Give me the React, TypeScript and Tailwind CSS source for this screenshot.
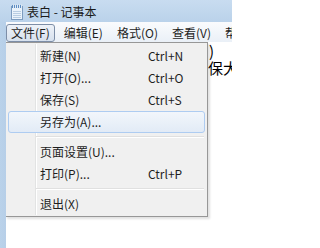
import type { ReactNode } from 'react';

const cjk = '"Noto Sans CJK SC", "Noto Sans", sans-serif';

function NotepadIcon() {
  return (
    <svg width="16" height="16" viewBox="0 0 16 16" className="shrink-0">
      <rect x="2.5" y="2.5" width="11" height="13" fill="#eaf3fb" stroke="#7c9cbf" />
      <rect x="3" y="1" width="10" height="3" fill="#5d8ec4" />
      {[4, 6, 8, 10, 12].map((x) => (
        <rect key={x} x={x} y="0.5" width="1" height="4" fill="#dfe9f4" />
      ))}
      {[7, 9, 11, 13].map((y) => (
        <line key={y} x1="4" y1={y + 0.5} x2="12" y2={y + 0.5} stroke="#b8cde2" />
      ))}
    </svg>
  );
}

function Item({ label, shortcut, active }: { label: string; shortcut?: string; active?: boolean }) {
  return (
    <div
      className={
        'mx-[2px] flex h-[22px] items-center rounded-[3px] border ' +
        (active ? 'border-[#aeccf1] bg-gradient-to-b from-[#f2f6fb] to-[#e2ebf6]' : 'border-transparent')
      }
    >
      <span className="ml-[31px] w-[108px] text-[12px] text-[#1e1e1e]">{label}</span>
      <span className="text-[12px] text-[#1e1e1e]">{shortcut}</span>
    </div>
  );
}

function Sep() {
  return (
    <div className="flex h-[8px] items-center pl-[30px] pr-[3px]">
      <div className="h-[2px] w-full border-t border-[#e0e0e0] border-b-white" style={{ borderBottomWidth: 1 }} />
    </div>
  );
}

function MenuTop({ children, selected }: { children: ReactNode; selected?: boolean }) {
  return (
    <div
      className={
        'flex h-[18px] shrink-0 items-center rounded-[3px] border px-[4px] text-[12px] text-[#1e1e1e] ' +
        (selected ? 'border-[#7d8ea7] bg-gradient-to-b from-[#eef2f8] to-[#d7e1ee]' : 'border-transparent')
      }
    >
      {children}
    </div>
  );
}

export default function App() {
  return (
    <div className="flex h-[248px] w-[232px] flex-col overflow-hidden bg-[#c3d8ee]" style={{ fontFamily: cjk }}>
      {/* title bar */}
      <div className="flex h-[22px] items-center gap-[1px] bg-gradient-to-b from-[#c8dcf0] to-[#bad2ea] pl-[9px] pt-[1px]">
        <NotepadIcon />
        <span className="ml-[1px] text-[12px] text-[#1a1a1a]">表白 - 记事本</span>
      </div>

      <div className="flex flex-1">
        {/* left frame */}
        <div className="w-[6px] bg-gradient-to-r from-[#bad2ea] to-[#b7cfe8]" />

        <div className="flex min-w-0 flex-1 flex-col">
          {/* menu bar */}
          <div className="flex h-[20px] items-end gap-[4px] overflow-hidden whitespace-nowrap bg-gradient-to-b from-[#fafbfd] to-[#eaf0f7]">
            <MenuTop selected>文件(F)</MenuTop>
            <MenuTop>编辑(E)</MenuTop>
            <MenuTop>格式(O)</MenuTop>
            <MenuTop>查看(V)</MenuTop>
            <MenuTop>帮助(H)</MenuTop>
          </div>

          {/* text area */}
          <div className="relative flex-1 overflow-hidden bg-white">
            <div className="pl-[202px] text-[15px] leading-[17px] text-black" style={{ fontFamily: '"Noto Sans CJK SC", sans-serif' }}>
              <div className="whitespace-nowrap pl-[1px]">)</div>
              <div className="whitespace-nowrap">保大</div>
            </div>

            {/* dropdown */}
            <div className="absolute left-[-1px] top-0 w-[203px] border border-[#979797] bg-[#f0f0f0] pb-[1px] pt-[2px] shadow-[2px_2px_2px_rgba(0,0,0,0.12)]">
              <div className="absolute bottom-[1px] left-[29px] top-[1px] w-[2px] border-l border-[#e2e3e3] border-r-white" style={{ borderRightWidth: 1 }} />
              <div className="relative">
                <Item label="新建(N)" shortcut="Ctrl+N" />
                <Item label="打开(O)..." shortcut="Ctrl+O" />
                <Item label="保存(S)" shortcut="Ctrl+S" />
                <Item label="另存为(A)..." active />
                <Sep />
                <Item label="页面设置(U)..." />
                <Item label="打印(P)..." shortcut="Ctrl+P" />
                <Sep />
                <Item label="退出(X)" />
              </div>
            </div>
          </div>
        </div>
      </div>
    </div>
  );
}
